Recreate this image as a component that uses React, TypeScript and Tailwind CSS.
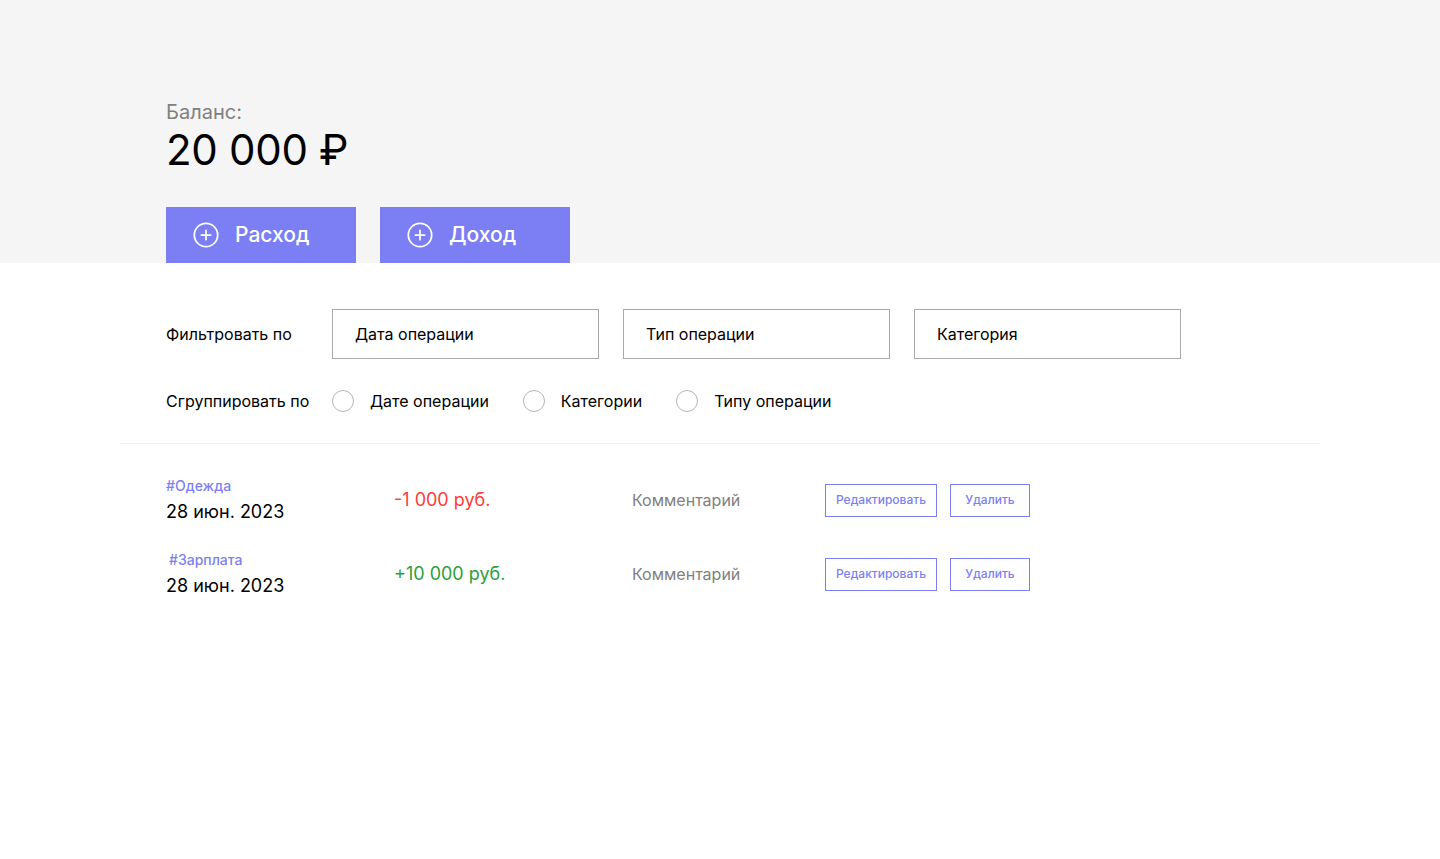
import { CirclePlus } from "lucide-react"

const filters = ["Дата операции", "Тип операции", "Категория"]
const groups = ["Дате операции", "Категории", "Типу операции"]

const operations = [
  { tag: "#Одежда", date: "28 июн. 2023", amount: "-1 000 руб.", income: false, comment: "Комментарий", shift: false },
  { tag: "#Зарплата", date: "28 июн. 2023", amount: "+10 000 руб.", income: true, comment: "Комментарий", shift: true },
]

function AddButton({ label }: { label: string }) {
  return (
    <button className="flex h-14 w-[190px] items-center gap-[15px] bg-[#7b7ff3] pl-[26px] text-[21px] font-medium text-white">
      <CirclePlus className="h-[28px] w-[28px]" strokeWidth={1.5} />
      {label}
    </button>
  )
}

export default function App() {
  return (
    <div className="min-h-[859px] bg-white font-['Inter','Noto_Sans',sans-serif] text-black">
      {/* Header */}
      <div className="bg-[#f5f5f5]">
        <div className="mx-auto max-w-[1200px] px-[46px] pt-[98px]">
          <div className="text-xl leading-7 text-[#808080]">Баланс:</div>
          <div className="text-[42px] leading-[48px] tracking-[-0.3px]">20 000 ₽</div>
          <div className="mt-[33px] flex gap-6">
            <AddButton label="Расход" />
            <AddButton label="Доход" />
          </div>
        </div>
      </div>

      {/* Filters */}
      <div className="mx-auto max-w-[1200px]">
        <div className="px-[46px] pt-[46px] pb-[30px]">
          <div className="flex items-center">
            <div className="w-[166px] text-base">Фильтровать по</div>
            <div className="flex gap-6">
              {filters.map((f) => (
                <div key={f} className="flex h-[50px] w-[267px] items-center border border-[#a8a8a8] pl-[22px] text-base">
                  {f}
                </div>
              ))}
            </div>
          </div>
          <div className="mt-[30px] flex items-center">
            <div className="w-[166px] text-base">Сгруппировать по</div>
            <div className="flex items-center gap-[34px]">
              {groups.map((g) => (
                <label key={g} className="flex items-center gap-4 text-base">
                  <span className="h-[22px] w-[22px] rounded-full border border-[#b5b5b5] bg-white" />
                  {g}
                </label>
              ))}
            </div>
          </div>
        </div>

        <div className="h-px bg-[#f0f0f0]" />

        {/* Operations */}
        <div className="flex flex-col gap-7 px-[46px] pt-[33px]">
          {operations.map((op) => (
            <div key={op.tag} className="flex items-center">
              <div className="w-[228px]">
                <div className={`text-sm font-medium leading-[18px] text-[#7b7ff3] ${op.shift ? "pl-[3px]" : ""}`}>{op.tag}</div>
                <div className="mt-[6px] text-lg leading-[22px]">{op.date}</div>
              </div>
              <div className={`w-[238px] text-lg ${op.income ? "text-[#2e9e3a]" : "text-[#ff3b3b]"}`}>{op.amount}</div>
              <div className="w-[193px] text-base text-[#808080]">{op.comment}</div>
              <div className="flex gap-[13px]">
                <button className="h-[33px] w-[112px] border border-[#7b7ff3] text-xs font-medium text-[#7b7ff3]">Редактировать</button>
                <button className="h-[33px] w-[80px] border border-[#7b7ff3] text-xs font-medium text-[#7b7ff3]">Удалить</button>
              </div>
            </div>
          ))}
        </div>
      </div>
    </div>
  )
}
